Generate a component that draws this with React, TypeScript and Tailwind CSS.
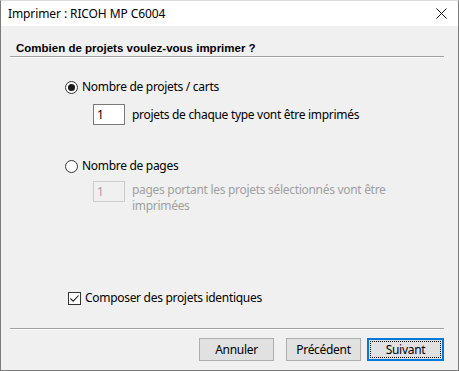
import React, { useState } from "react";

const ui = { fontFamily: '"Noto Sans", "Open Sans", sans-serif' };
const head = { fontFamily: '"Liberation Sans", Arial, sans-serif' };

const Radio: React.FC<{ checked: boolean }> = ({ checked }) => (
  <span className="w-[13px] h-[13px] rounded-full border border-[#333333] bg-white flex items-center justify-center shrink-0">
    {checked && <span className="w-[7px] h-[7px] rounded-full bg-[#1a1a1a]" />}
  </span>
);

export default function App() {
  const [mode, setMode] = useState<"projets" | "pages">("projets");
  const [count, setCount] = useState("1");
  const [same, setSame] = useState(true);

  return (
    <div
      className="w-[459px] h-[371px] border border-[#7a7a7a] border-t-[#dcdcdc] flex flex-col text-[12px] text-black overflow-hidden"
      style={ui}
    >
      {/* Title bar */}
      <div className="h-[25px] bg-white flex items-center justify-between pl-[7px] pr-[9px]">
        <span className="leading-[16px] tracking-[-0.1px]">Imprimer : RICOH MP C6004</span>
        <svg width="11" height="11" viewBox="0 0 11 11" className="mr-[2px]">
          <path d="M0.5 0.5 L10.5 10.5 M10.5 0.5 L0.5 10.5" stroke="#111" strokeWidth="1" />
        </svg>
      </div>

      {/* Body */}
      <div className="flex-1 bg-[#f0f0f0] flex flex-col tracking-[-0.3px]">
        <div className="mt-[14px] pl-[15px] font-bold text-[11.5px] leading-[16px] tracking-normal" style={head}>
          Combien de projets voulez-vous imprimer ?
        </div>
        <div className="ml-[9px] w-[434px] border-t border-[#a0a0a0] border-b border-b-white" />

        {/* Option 1 */}
        <div className="mt-[21px] ml-[64px] flex items-center gap-[4px] h-[16px] cursor-default" onClick={() => setMode("projets")}>
          <Radio checked={mode === "projets"} />
          <span className="leading-[16px]">Nombre de projets / carts</span>
        </div>
        <div className="mt-[9px] ml-[92px] flex items-center gap-[7px]">
          <input
            value={count}
            onChange={(e) => setCount(e.target.value)}
            className="w-[32px] h-[21px] border border-[#7a7a7a] bg-white px-[3px] text-[12px] outline-none"
          />
          <span className="leading-[16px]">projets de chaque type vont être imprimés</span>
        </div>

        {/* Option 2 */}
        <div className="mt-[33px] ml-[64px] flex items-center gap-[4px] h-[16px] cursor-default" onClick={() => setMode("pages")}>
          <Radio checked={mode === "pages"} />
          <span className="leading-[16px]">Nombre de pages</span>
        </div>
        <div className="mt-[7px] ml-[92px] flex items-start gap-[7px] text-[#a0a0a0]">
          <div className="w-[32px] h-[21px] border border-[#cccccc] bg-[#f0f0f0] px-[3px] leading-[19px]">1</div>
          <span className="leading-[16px] pt-[1px]">
            pages portant les projets sélectionnés vont être
            <br />
            imprimées
          </span>
        </div>

        {/* Checkbox */}
        <div className="mt-[76px] ml-[67px] flex items-center gap-[4px] h-[16px] cursor-default" onClick={() => setSame(!same)}>
          <span className="w-[13px] h-[13px] border border-[#333333] bg-white flex items-center justify-center">
            {same && (
              <svg width="11" height="11" viewBox="0 0 11 11">
                <path d="M1.5 5.5 L4.2 8.2 L9.5 2.5" fill="none" stroke="#222" strokeWidth="1.1" />
              </svg>
            )}
          </span>
          <span className="leading-[16px]">Composer des projets identiques</span>
        </div>

        {/* Footer */}
        <div className="mt-auto ml-[9px] w-[434px] border-t border-[#a0a0a0] border-b border-b-white" />
        <div className="mt-[8px] mb-[9px] flex justify-end pr-[14px] gap-[12px]">
          <button className="w-[75px] h-[23px] bg-[#e1e1e1] border border-[#adadad] leading-[16px]">Annuler</button>
          <div className="flex gap-[6px]">
            <button className="w-[75px] h-[23px] bg-[#e1e1e1] border border-[#adadad] leading-[16px]">Précédent</button>
            <button className="w-[77px] h-[23px] bg-[#e1e1e1] border-2 border-[#0078d7] p-[1px]">
              <span className="w-full h-full flex items-center justify-center border border-dotted border-black leading-[14px]">
                Suivant
              </span>
            </button>
          </div>
        </div>
      </div>
    </div>
  );
}
